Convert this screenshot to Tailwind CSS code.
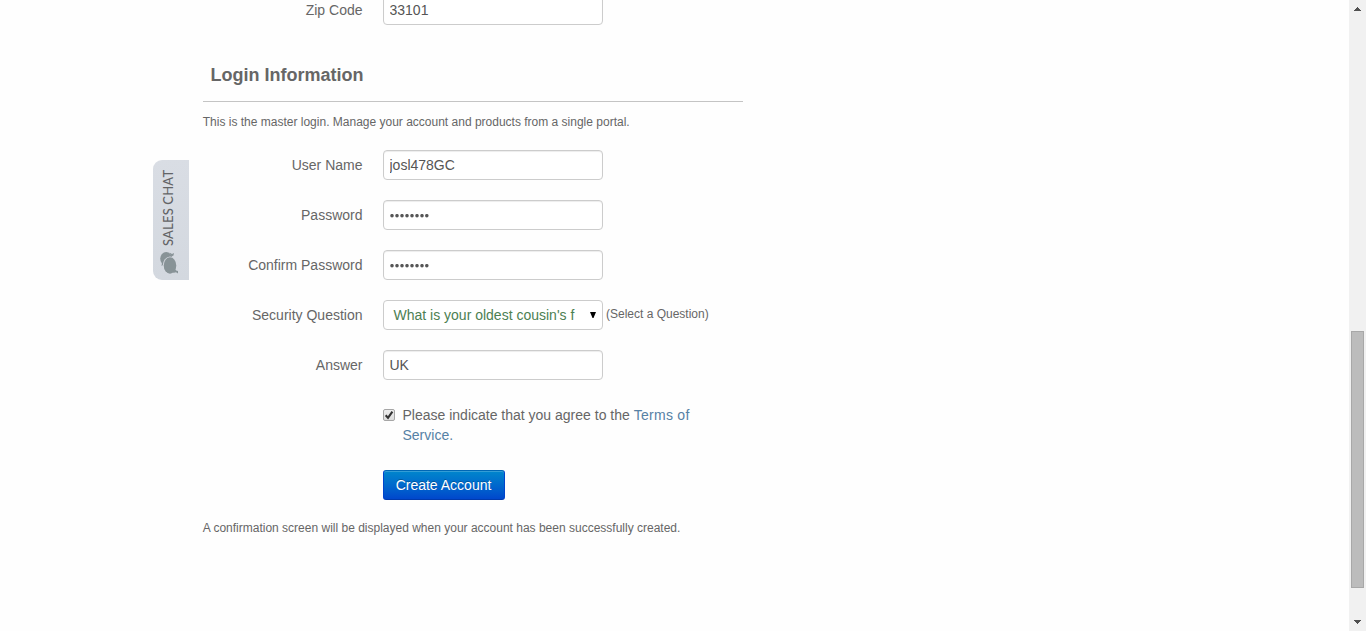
<!DOCTYPE html>
<html lang="en">
<head>
<meta charset="utf-8">
<title>Create Account</title>
<script src="https://cdn.jsdelivr.net/npm/@tailwindcss/browser@4"></script>
</head>
<body class="relative flex h-[631px] overflow-hidden bg-[#fefefe] font-['Liberation_Sans',Arial,sans-serif] text-sm leading-5 text-[#666]">
  <main class="flex-1 pl-[203px]">
    <form class="w-[540px]">
      <div class="-mt-[5px] flex h-[30px]">
        <label class="w-40 pt-[5px] pr-[0.5px] text-right">Zip Code</label>
        <input type="text" value="33101" class="ml-5 h-[30px] w-[220px] rounded border border-[#ccc] bg-white px-[5.5px] text-[#555] shadow-[inset_0_1px_1px_rgba(0,0,0,0.075)]">
      </div>
      <h2 class="mt-[30px] h-[47px] border-b border-[#c4c4c4] pl-[7.5px] pt-[10px] text-lg leading-5 font-bold">Login Information</h2>
      <p class="mt-[10px] -ml-[0.25px] text-xs leading-5">This is the master login. Manage your account and products from a single portal.</p>
      <div class="mt-[18px] flex flex-col gap-5">
        <div class="flex h-[30px]">
          <label class="w-40 pt-[5px] pr-[0.5px] text-right">User Name</label>
          <input type="text" value="josl478GC" class="ml-5 h-[30px] w-[220px] rounded border border-[#ccc] bg-white px-[5.5px] text-[#555] shadow-[inset_0_1px_1px_rgba(0,0,0,0.075)]">
        </div>
        <div class="flex h-[30px]">
          <label class="w-40 pt-[5px] pr-[0.5px] text-right">Password</label>
          <div class="ml-5 flex h-[30px] w-[220px] items-center rounded border border-[#ccc] bg-white pt-px pl-[5.5px] shadow-[inset_0_1px_1px_rgba(0,0,0,0.075)]">
            <svg class="h-1 w-10" viewBox="0 0 40 4" fill="#555"><circle cx="2" cy="1.7" r="1.75"/><circle cx="7" cy="1.7" r="1.75"/><circle cx="12" cy="1.7" r="1.75"/><circle cx="17" cy="1.7" r="1.75"/><circle cx="22" cy="1.7" r="1.75"/><circle cx="27" cy="1.7" r="1.75"/><circle cx="32" cy="1.7" r="1.75"/><circle cx="36.8" cy="1.7" r="1.75"/></svg>
          </div>
        </div>
        <div class="flex h-[30px]">
          <label class="w-40 pt-[5px] pr-[0.5px] text-right">Confirm Password</label>
          <div class="ml-5 flex h-[30px] w-[220px] items-center rounded border border-[#ccc] bg-white pt-px pl-[5.5px] shadow-[inset_0_1px_1px_rgba(0,0,0,0.075)]">
            <svg class="h-1 w-10" viewBox="0 0 40 4" fill="#555"><circle cx="2" cy="1.7" r="1.75"/><circle cx="7" cy="1.7" r="1.75"/><circle cx="12" cy="1.7" r="1.75"/><circle cx="17" cy="1.7" r="1.75"/><circle cx="22" cy="1.7" r="1.75"/><circle cx="27" cy="1.7" r="1.75"/><circle cx="32" cy="1.7" r="1.75"/><circle cx="36.8" cy="1.7" r="1.75"/></svg>
          </div>
        </div>
        <div class="flex h-[30px]">
          <label class="w-40 pt-[5px] pr-[0.5px] text-right">Security Question</label>
          <div class="ml-5 flex h-[30px] w-[220px] items-center justify-between rounded border border-[#ccc] bg-white pl-[9.5px] pr-[6px] text-[#4c8052]">
            <span class="whitespace-nowrap">What is your oldest cousin's f</span>
            <svg class="h-[6px] w-[6px]" viewBox="0 0 6 6" fill="#000"><path d="M0 0h6L3.500 6h-1z"/></svg>
          </div>
          <span class="ml-[3px] pt-1 text-xs leading-5">(Select a Question)</span>
        </div>
        <div class="flex h-[30px]">
          <label class="w-40 pt-[5px] pr-[0.5px] text-right">Answer</label>
          <input type="text" value="UK" class="ml-5 h-[30px] w-[220px] rounded border border-[#ccc] bg-white px-[5.5px] text-[#555] shadow-[inset_0_1px_1px_rgba(0,0,0,0.075)]">
        </div>
      </div>
      <div class="mt-[25px] flex pl-[180px]">
        <svg class="mt-1 h-[13px] w-[13px] shrink-0" viewBox="0 0 13 13">
          <defs><linearGradient id="box" x2="0" y2="1"><stop stop-color="#eee"/><stop offset="1" stop-color="#dcdcdc"/></linearGradient></defs>
          <rect x=".5" y=".5" width="11" height="11" rx="1.5" fill="url(#box)" stroke="#a6a6a6"/>
          <path d="M2.7 6.3l2.3 2.6 4.4-6.3" fill="none" stroke="#333" stroke-width="2.1"/>
        </svg>
        <p class="ml-[6.5px] w-[300px]">Please indicate that you agree to the <a class="tracking-[0.28px] text-[#5681a5]">Terms of</a><br><a class="text-[#5681a5]">Service.</a></p>
      </div>
      <button type="button" class="mt-[25px] ml-[180px] block h-[30px] w-[122px] rounded-[3px] border border-[#0044cc] border-t-[#0067b5] border-b-[#003aad] bg-linear-to-b from-[#0088cc] to-[#0044cc] bg-origin-border pr-px text-white shadow-[inset_0_1px_0_rgba(255,255,255,0.2)] [text-shadow:0_-1px_0_rgba(0,0,0,0.25)]">Create Account</button>
      <p class="mt-[18px] -ml-[0.25px] text-xs leading-5">A confirmation screen will be displayed when your account has been successfully created.</p>
    </form>
  </main>
  <aside class="absolute top-[160px] left-[153px] flex h-[120px] w-9 flex-col items-start rounded-l-[9px] bg-linear-to-b from-[#d9dde4] to-[#d3d8df] pt-[8px]">
    <span class="ml-[5px] h-[78px] w-5 text-[13px] leading-5 tracking-[0.17px] whitespace-nowrap text-[#636466] font-['Lato',sans-serif] font-medium rotate-180 [writing-mode:vertical-rl]">SALES CHAT</span>
    <svg class="ml-[7px] mt-[6px] h-6 w-5" viewBox="0 0 20 24">
      <ellipse cx="6.200" cy="6.800" rx="6" ry="6.800" fill="#889397"/>
      <path d="M2 11l-.5 3 3.500-2zM9.500 .5l2.500 1.500 2-1-.5 2.500-2 1z" fill="#889397"/>
      <ellipse cx="10" cy="13.500" rx="7.200" ry="9" fill="#d6dae1"/>
      <ellipse cx="10" cy="13.500" rx="6.300" ry="8.200" fill="#889397"/>
      <path d="M14.500 17l2.500 2 1-.3v2.800l-2-1.200-3 .7z" fill="#889397"/>
    </svg>
  </aside>
  <div class="flex w-[17px] flex-col items-center bg-[#f1f1f1]">
    <svg class="mt-[7px] h-1 w-[7px]" viewBox="0 0 7 4" fill="#505050" shape-rendering="crispEdges"><path d="M3 0h1v1h1v1h1v1h1v1H0V3h1V2h1V1h1z"/></svg>
    <div class="mt-[320px] h-[257px] w-[13px] border border-[#a8a8a8] bg-[#bcbcbc]"></div>
    <svg class="mt-8 h-1 w-[7px]" viewBox="0 0 7 4" fill="#505050" shape-rendering="crispEdges"><path d="M0 0h7v1H6v1H5v1H4v1H3V3H2V2H1V1H0z"/></svg>
  </div>
</body>
</html>
